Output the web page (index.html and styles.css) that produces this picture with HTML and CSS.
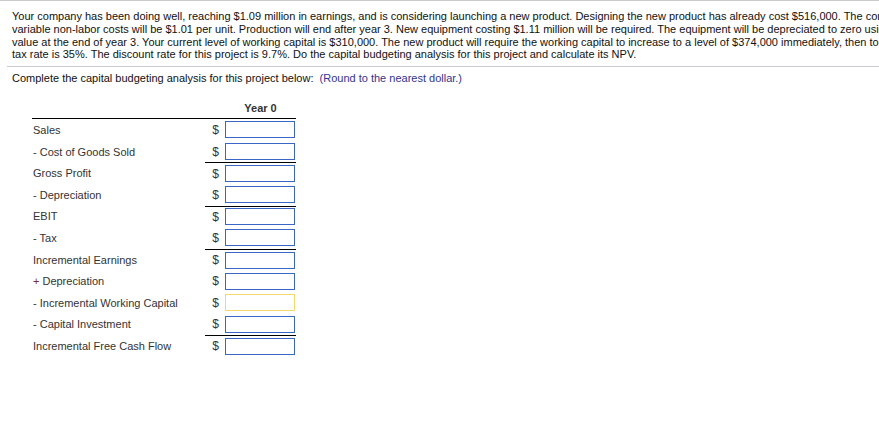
FILE: index.html
```html
<!DOCTYPE html>
<html>
<head>
<meta charset="utf-8">
<link rel="stylesheet" href="styles.css">
</head>
<body>
<div class="page">
  <div class="intro">
    <span class="line">Your company has been doing well, reaching $1.09 million in earnings, and is considering launching a new product. Designing the new product has already cost $516,000. The company estimates that it will sell 807,000 units per year for $3.07 per unit and</span>
    <span class="line">variable non-labor costs will be $1.01 per unit. Production will end after year 3. New equipment costing $1.11 million will be required. The equipment will be depreciated to zero using the 7-year MACRS schedule. You plan to sell the equipment for book</span>
    <span class="line">value at the end of year 3. Your current level of working capital is $310,000. The new product will require the working capital to increase to a level of $374,000 immediately, then to $402,000 in year 1, in year 2 the level will be $346,000. Your</span>
    <span class="line">tax rate is 35%. The discount rate for this project is 9.7%. Do the capital budgeting analysis for this project and calculate its NPV.</span>
  </div>
  <div class="instr">Complete the capital budgeting analysis for this project below:&nbsp; <span class="note">(Round to the nearest dollar.)</span></div>

  <div class="sheet">
    <div class="head"><span class="year">Year 0</span></div>
    <div class="row"><span class="label">Sales</span><span class="val"><span class="cur">$</span><input class="box" type="text"></span></div>
    <div class="row"><span class="label">- Cost of Goods Sold</span><span class="val"><span class="cur">$</span><input class="box" type="text"></span></div>
    <div class="row sum"><span class="label">Gross Profit</span><span class="val"><span class="cur">$</span><input class="box" type="text"></span></div>
    <div class="row"><span class="label">- Depreciation</span><span class="val"><span class="cur">$</span><input class="box" type="text"></span></div>
    <div class="row sum"><span class="label">EBIT</span><span class="val"><span class="cur">$</span><input class="box" type="text"></span></div>
    <div class="row"><span class="label">- Tax</span><span class="val"><span class="cur">$</span><input class="box" type="text"></span></div>
    <div class="row sum"><span class="label">Incremental Earnings</span><span class="val"><span class="cur">$</span><input class="box" type="text"></span></div>
    <div class="row"><span class="label"><span class="plus">+</span> Depreciation</span><span class="val"><span class="cur">$</span><input class="box" type="text"></span></div>
    <div class="row"><span class="label">- Incremental Working Capital</span><span class="val"><span class="cur">$</span><input class="box active" type="text"></span></div>
    <div class="row"><span class="label">- Capital Investment</span><span class="val"><span class="cur">$</span><input class="box" type="text"></span></div>
    <div class="row sum"><span class="label">Incremental Free Cash Flow</span><span class="val"><span class="cur">$</span><input class="box" type="text"></span></div>
  </div>
</div>
</body>
</html>
```

FILE: styles.css
```css
html, body {
  margin: 0;
  padding: 0;
  overflow: hidden;
  background: #fff;
}
body {
  font-family: "Liberation Sans", Arial, sans-serif;
  font-size: 11px;
  color: #111;
}
.page {
  border-top: 1px solid #c9c9d2;
  padding-left: 7px;
}
.intro {
  padding: 9px 0 5px 5px;
  border-bottom: 1px solid #c9c9d2;
  line-height: 12.8px;
}
.line {
  display: block;
  white-space: nowrap;
}
.instr {
  padding: 5px 0 0 5px;
  line-height: 13px;
  white-space: nowrap;
}
.note {
  color: #33338f;
}
.sheet {
  margin: 17px 0 0 25px;
  width: 264px;
  color: #333;
}
.head {
  display: flex;
  justify-content: flex-end;
  border-bottom: 1px solid #000;
  padding-bottom: 4px;
}
.year {
  width: 71px;
  text-align: center;
  font-weight: bold;
  color: #333;
}
.row {
  display: flex;
  align-items: stretch;
  height: 21.6px;
}
.label {
  flex: 1;
  display: flex;
  align-items: center;
  padding-left: 1px;
}
.plus {
  color: #7a2f2f;
  margin-right: 3px;
}
.val {
  box-sizing: border-box;
  width: 91px;
  display: flex;
  align-items: center;
  padding-right: 1px;
}
.row.sum .val {
  border-top: 1px solid #000;
}
.cur {
  width: 20px;
  text-align: right;
  padding-right: 6px;
  box-sizing: border-box;
  font-size: 12px;
}
.box {
  box-sizing: border-box;
  width: 70px;
  height: 17px;
  margin: 0;
  padding: 0 2px;
  border: 1px solid #3a66c8;
  border-radius: 0;
  background: #fff;
  outline: none;
  font-family: inherit;
  font-size: 11px;
}
.box.active {
  border-color: #f3d96a;
}
```
